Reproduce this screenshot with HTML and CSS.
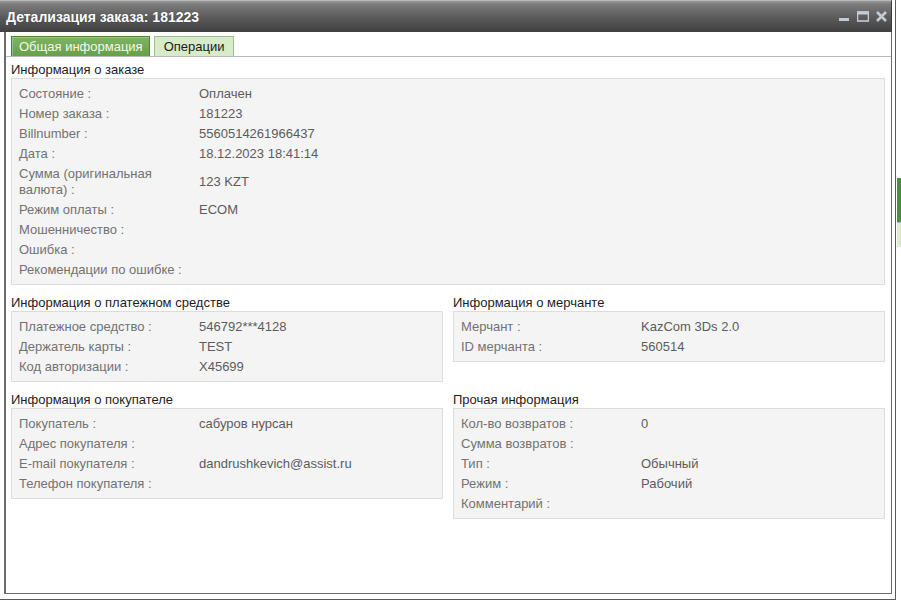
FILE: index.html
```html
<!DOCTYPE html>
<html lang="ru">
<head>
<meta charset="utf-8">
<title>Детализация заказа</title>
<link rel="stylesheet" href="styles.css">
</head>
<body>
<div class="window">
  <div class="titlebar">
    <span class="title">Детализация заказа: 181223</span>
    <div class="tools">
      <svg class="tool" width="11" height="11" viewBox="0 0 11 11"><rect x="0" y="7" width="10" height="3" fill="#c3ccd5"/></svg>
      <svg class="tool" width="12" height="11" viewBox="0 0 12 11"><rect x="0.5" y="1" width="11" height="9" fill="none" stroke="#c3ccd5" stroke-width="1.6"/><rect x="0" y="0.5" width="12" height="3" fill="#c3ccd5"/></svg>
      <svg class="tool" width="11" height="11" viewBox="0 0 11 11"><path d="M1 1 L10 10 M10 1 L1 10" stroke="#c3ccd5" stroke-width="2.6"/></svg>
    </div>
  </div>
  <div class="panel">
    <div class="tabs">
      <div class="tab active">Общая информация</div>
      <div class="tab">Операции</div>
    </div>
    <div class="tab-body">
      <div class="section">
        <div class="sec-title">Информация о заказе</div>
        <div class="box">
          <div class="row"><div class="lbl">Состояние :</div><div class="val">Оплачен</div></div>
          <div class="row"><div class="lbl">Номер заказа :</div><div class="val">181223</div></div>
          <div class="row"><div class="lbl">Billnumber :</div><div class="val">5560514261966437</div></div>
          <div class="row"><div class="lbl">Дата :</div><div class="val">18.12.2023 18:41:14</div></div>
          <div class="row"><div class="lbl">Сумма (оригинальная валюта) :</div><div class="val">123 KZT</div></div>
          <div class="row"><div class="lbl">Режим оплаты :</div><div class="val">ECOM</div></div>
          <div class="row"><div class="lbl">Мошенничество :</div><div class="val"></div></div>
          <div class="row"><div class="lbl">Ошибка :</div><div class="val"></div></div>
          <div class="row"><div class="lbl">Рекомендации по ошибке :</div><div class="val"></div></div>
        </div>
      </div>
      <div class="grid">
        <div class="section">
          <div class="sec-title">Информация о платежном средстве</div>
          <div class="box">
            <div class="row"><div class="lbl">Платежное средство :</div><div class="val">546792***4128</div></div>
            <div class="row"><div class="lbl">Держатель карты :</div><div class="val">TEST</div></div>
            <div class="row"><div class="lbl">Код авторизации :</div><div class="val">X45699</div></div>
          </div>
        </div>
        <div class="section">
          <div class="sec-title">Информация о мерчанте</div>
          <div class="box">
            <div class="row"><div class="lbl">Мерчант :</div><div class="val">KazCom 3Ds 2.0</div></div>
            <div class="row"><div class="lbl">ID мерчанта :</div><div class="val">560514</div></div>
          </div>
        </div>
        <div class="section">
          <div class="sec-title">Информация о покупателе</div>
          <div class="box">
            <div class="row"><div class="lbl">Покупатель :</div><div class="val">сабуров нурсан</div></div>
            <div class="row"><div class="lbl">Адрес покупателя :</div><div class="val"></div></div>
            <div class="row"><div class="lbl">E-mail покупателя :</div><div class="val">dandrushkevich@assist.ru</div></div>
            <div class="row"><div class="lbl">Телефон покупателя :</div><div class="val"></div></div>
          </div>
        </div>
        <div class="section">
          <div class="sec-title">Прочая информация</div>
          <div class="box">
            <div class="row"><div class="lbl">Кол-во возвратов :</div><div class="val">0</div></div>
            <div class="row"><div class="lbl">Сумма возвратов :</div><div class="val"></div></div>
            <div class="row"><div class="lbl">Тип :</div><div class="val">Обычный</div></div>
            <div class="row"><div class="lbl">Режим :</div><div class="val">Рабочий</div></div>
            <div class="row"><div class="lbl">Комментарий :</div><div class="val"></div></div>
          </div>
        </div>
      </div>
    </div>
  </div>
</div>
<div class="bg-strip">
  <div class="bg-dark"></div>
  <div class="bg-light"></div>
</div>
</body>
</html>
```

FILE: styles.css
```css
html, body {
  margin: 0;
  padding: 0;
  background: #ffffff;
}
body {
  display: flex;
  align-items: flex-start;
  font-family: "Liberation Sans", Arial, sans-serif;
  font-size: 13px;
  width: 901px;
  height: 603px;
  overflow: hidden;
}
.window {
  flex: none;
  box-sizing: border-box;
  width: 896px;
  height: 600px;
  background: #ffffff;
  border-right: 1px solid #5a5a5a;
  border-bottom: 1px solid #5a5a5a;
  display: flex;
  flex-direction: column;
}
.titlebar {
  flex: none;
  box-sizing: border-box;
  width: 892px;
  height: 32px;
  background: linear-gradient(#9a9a9a 0px, #7c7c7c 3px, #5c5c5c 16px, #3e3e3e 32px);
  border-top: 1px solid #b8b8b8;
  border-right: 1px solid #3a3a3a;
  display: flex;
  align-items: center;
  justify-content: space-between;
  padding: 0 4px 0 6px;
}
.title {
  color: #ffffff;
  font-weight: bold;
  font-size: 14px;
  text-shadow: 0 0 1px rgba(0,0,0,0.4);
}
.tools {
  display: flex;
  align-items: center;
  gap: 7px;
  padding-bottom: 1px;
}
.tool {
  display: block;
}
.panel {
  flex: 1;
  box-sizing: border-box;
  width: 888px;
  margin: 0 0 5px 4px;
  border: 1px solid #6a6a6a;
  border-left-width: 2px;
  border-top: none;
  background: #ffffff;
  display: flex;
  flex-direction: column;
}
.tabs {
  display: flex;
  gap: 4px;
  padding: 4px 0 0 5px;
  height: 24px;
  box-sizing: border-box;
}
.tab {
  box-sizing: border-box;
  height: 20px;
  line-height: 19px;
  padding: 0 9px 0 9px;
  border: 1px solid #9fc18f;
  border-bottom: none;
  background: #d7eaca;
  color: #1a1a1a;
  font-size: 13px;
  white-space: nowrap;
}
.tab.active {
  padding: 0 6px 0 7px;
  background: linear-gradient(#7fb462, #66a048);
  border-color: #4f8436;
  color: #f3f7ef;
  box-shadow: inset 1px 1px 0 rgba(255,255,255,0.25);
}
.tab-body {
  border-top: 1px solid #b9b9b9;
  padding: 4px 6px 0 5px;
}
.sec-title {
  line-height: 17px;
  color: #1d1d1d;
  font-size: 13px;
  white-space: nowrap;
}
.box {
  background: #f4f4f4;
  border: 1px solid #dcdcdc;
  padding: 5px 0 4px 7px;
}
.row {
  display: grid;
  grid-template-columns: 180px 1fr;
  align-items: center;
  padding: 2px 0;
  line-height: 16px;
}
.lbl {
  color: #727272;
  padding-right: 10px;
}
.val {
  color: #5c5c5c;
}
.grid {
  display: grid;
  grid-template-columns: 432px 432px;
  column-gap: 10px;
  row-gap: 9px;
  margin-top: 9px;
  align-items: start;
}
.bg-strip {
  flex: none;
  margin: 178px 0 0 1px;
  width: 4px;
}
.bg-dark {
  height: 44px;
  background: #4b8d3f;
}
.bg-light {
  height: 24px;
  background: #dcedca;
  border-top: 1px solid #9fb4c4;
}
```
